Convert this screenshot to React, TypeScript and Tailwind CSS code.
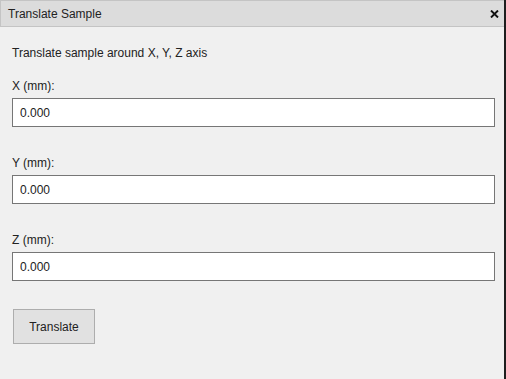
import React, { useState } from 'react';

const font = { fontFamily: '"Liberation Sans", Arial, sans-serif' };

function Field({ label, value, onChange, first }: { label: string; value: string; onChange: (v: string) => void; first?: boolean }) {
  return (
    <div className={first ? 'mt-[19px]' : 'mt-[29px]'}>
      <label className="block h-[14px] text-[12px] leading-[14px] text-[#222]">{label}</label>
      <input
        value={value}
        onChange={(e) => onChange(e.target.value)}
        className="mt-[5px] block h-[29px] w-[483px] border border-[#767676] bg-white px-[7px] text-[12px] text-[#222] outline-none"
        style={font}
      />
    </div>
  );
}

export default function App() {
  const [x, setX] = useState('0.000');
  const [y, setY] = useState('0.000');
  const [z, setZ] = useState('0.000');

  return (
    <div className="flex h-[379px] w-[506px] bg-[#f0f0f0]" style={font}>
      <div className="w-[504px]">
        <div className="flex h-[27px] items-center justify-between border border-r-0 border-[#c4c4c4] bg-[#dcdcdc] pl-[7px] pr-[4px]">
          <span className="text-[12px] leading-[14px] text-[#222]">Translate Sample</span>
          <button className="flex h-[9px] w-[12px] items-center justify-center">
            <svg width="9" height="8" viewBox="0 0 9 8">
              <path d="M1 0.5 L8 7.5 M8 0.5 L1 7.5" stroke="#111" strokeWidth="1.9" fill="none" />
            </svg>
          </button>
        </div>
        <div className="pl-[12px] pt-[19px]">
          <p className="h-[14px] text-[12px] leading-[14px] text-[#222]">Translate sample around X, Y, Z axis</p>
          <Field first label="X (mm):" value={x} onChange={setX} />
          <Field label="Y (mm):" value={y} onChange={setY} />
          <Field label="Z (mm):" value={z} onChange={setZ} />
          <button className="ml-[1px] mt-[28px] h-[35px] w-[82px] border border-[#adadad] bg-[#e1e1e1] text-[12px] text-[#222]" style={font}>
            Translate
          </button>
        </div>
      </div>
      <div className="w-[2px] bg-[#1e1e1e]" />
    </div>
  );
}
